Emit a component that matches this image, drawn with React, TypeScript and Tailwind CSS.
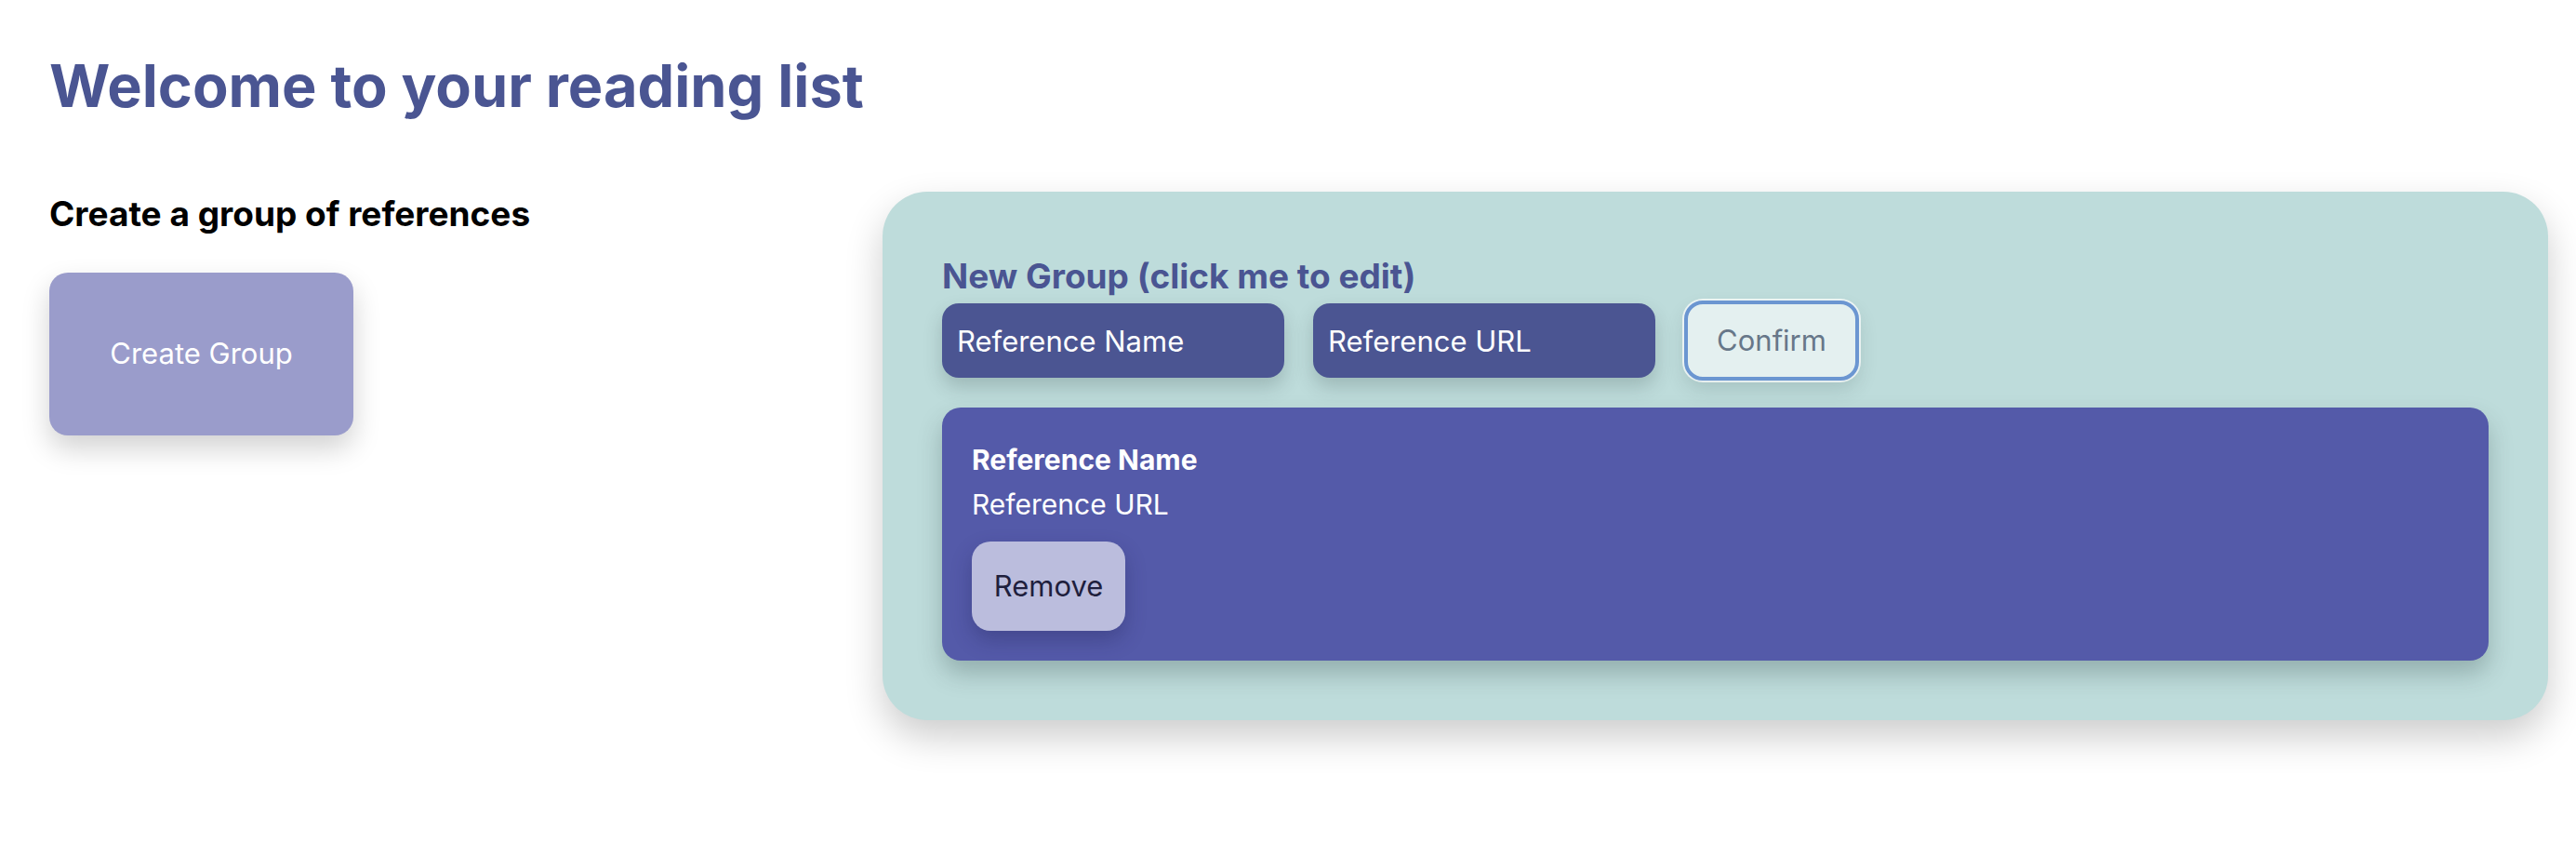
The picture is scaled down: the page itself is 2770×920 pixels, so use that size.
import { useState } from 'react';

interface Reference {
  name: string;
  url: string;
}

function ReferenceCard({ reference }: { reference: Reference }) {
  return (
    <div className="mt-[29px] rounded-[20px] bg-[#545aa9] px-[32px] pt-[32px] pb-[32px] shadow-[0_14px_26px_rgba(40,60,60,0.28)]">
      <p className="text-[30px] font-bold leading-[48px] text-white">{reference.name}</p>
      <p className="text-[30px] leading-[48px] text-white">{reference.url}</p>
      <button className="mt-[16px] flex h-[96px] w-[165px] items-center justify-center rounded-[20px] bg-[#bbbddd] text-[31px] text-[#1f1f3d] shadow-[0_10px_22px_rgba(30,30,80,0.3)]">
        Remove
      </button>
    </div>
  );
}

export default function App() {
  const [name, setName] = useState('');
  const [url, setUrl] = useState('');
  const references: Reference[] = [{ name: 'Reference Name', url: 'Reference URL' }];

  return (
    <div className="min-h-[920px] bg-white pl-[53px] pr-[30px] pt-[54px] font-['Inter',sans-serif]">
      <h1 className="text-[63px] font-bold leading-[77px] text-[#4a5592]">Welcome to your reading list</h1>

      <div className="mt-[75px] flex items-start">
        <div className="w-[896px] shrink-0">
          <h3 className="pt-[2px] text-[37px] font-bold leading-[44px] text-black">Create a group of references</h3>
          <button className="mt-[41px] h-[175px] w-[327px] rounded-[20px] bg-[#9a9ccb] text-[31px] text-white shadow-[0_14px_30px_rgba(0,0,0,0.18)]">
            Create Group
          </button>
        </div>

        <div className="flex-1 rounded-[48px] bg-[#bedcdb] px-[64px] pt-[69px] pb-[64px] shadow-[0_18px_40px_rgba(0,0,0,0.2)]">
          <h3 className="text-[37px] font-bold leading-[44px] text-[#4a5592]">New Group (click me to edit)</h3>

          <div className="mt-[4px] flex items-center gap-[31px]">
            <input
              value={name}
              onChange={(e) => setName(e.target.value)}
              placeholder="Reference Name"
              className="h-[80px] w-[368px] rounded-[18px] bg-[#4b5592] px-[16px] text-[31px] text-white shadow-[0_10px_20px_rgba(40,60,60,0.22)] outline-none placeholder:text-white"
            />
            <input
              value={url}
              onChange={(e) => setUrl(e.target.value)}
              placeholder="Reference URL"
              className="h-[80px] w-[368px] rounded-[18px] bg-[#4b5592] px-[16px] text-[31px] text-white shadow-[0_10px_20px_rgba(40,60,60,0.22)] outline-none placeholder:text-white"
            />
            <button className="h-[86px] w-[188px] rounded-[20px] border-[4px] border-[#6b96d1] bg-[#e4f0f0] text-[31px] text-[#677789] shadow-[0_0_0_2px_rgba(255,255,255,0.7),0_10px_20px_rgba(40,60,60,0.15)]">
              Confirm
            </button>
          </div>

          {references.map((r, i) => (
            <ReferenceCard key={i} reference={r} />
          ))}
        </div>
      </div>
    </div>
  );
}
